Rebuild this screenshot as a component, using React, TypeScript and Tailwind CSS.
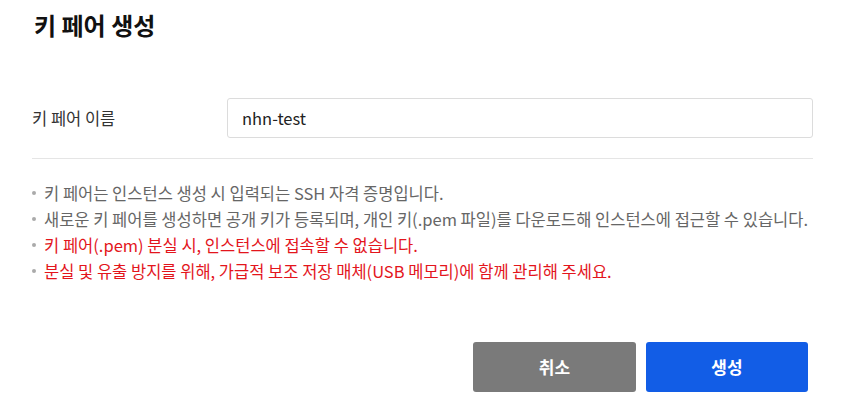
import React from 'react';

const notes = [
  { text: '키 페어는 인스턴스 생성 시 입력되는 SSH 자격 증명입니다.', warn: false },
  { text: '새로운 키 페어를 생성하면 공개 키가 등록되며, 개인 키(.pem 파일)를 다운로드해 인스턴스에 접근할 수 있습니다.', warn: false },
  { text: '키 페어(.pem) 분실 시, 인스턴스에 접속할 수 없습니다.', warn: true },
  { text: '분실 및 유출 방지를 위해, 가급적 보조 저장 매체(USB 메모리)에 함께 관리해 주세요.', warn: true },
];

const App = () => {
  return (
    <div
      className="w-[855px] h-[405px] bg-white overflow-hidden"
      style={{ fontFamily: '"Noto Sans CJK KR", "Noto Sans", sans-serif' }}
    >
      <div className="pl-[32px] pr-[42px] pt-[8px]">
        <h2 className="text-[24px] leading-[34px] font-bold text-[#111] pl-[2px]">키 페어 생성</h2>

        <div className="mt-[56px] flex items-center">
          <label className="w-[195px] text-[16.5px] text-[#333]">키 페어 이름</label>
          <input
            type="text"
            defaultValue="nhn-test"
            className="flex-1 h-[40px] px-[14px] border border-[#dcdcdc] rounded-[3px] text-[16.5px] text-[#222] outline-none"
          />
        </div>

        <div className="mt-[20px] border-t border-[#e5e5e5]" />

        <ul className="mt-[21px]">
          {notes.map((n) => (
            <li key={n.text} className="flex items-center text-[16.5px] leading-[26px]">
              <span className="w-[4px] h-[4px] rounded-full bg-[#aaa] mr-[8px] shrink-0" />
              <span className={n.warn ? 'text-[#e3151c]' : 'text-[#666]'}>{n.text}</span>
            </li>
          ))}
        </ul>

        <div className="mt-[58px] flex justify-end gap-[10px] pr-[5px]">
          <button className="w-[163px] h-[50px] rounded-[3px] bg-[#7a7a7a] text-white text-[17px] font-bold">
            취소
          </button>
          <button className="w-[162px] h-[50px] rounded-[3px] bg-[#125de6] text-white text-[17px] font-bold">
            생성
          </button>
        </div>
      </div>
    </div>
  );
};

export default App;
